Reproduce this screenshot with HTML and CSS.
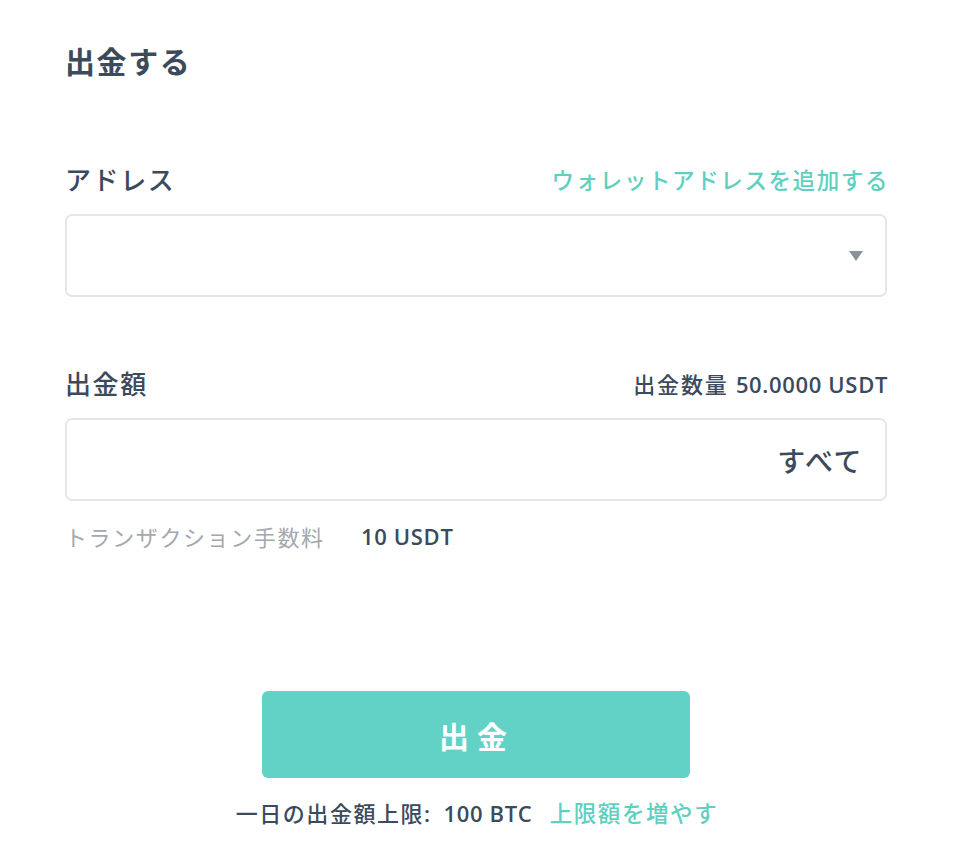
FILE: index.html
```html
<!DOCTYPE html>
<html lang="ja">
<head>
<meta charset="utf-8">
<link rel="stylesheet" href="styles.css">
</head>
<body>
<div class="page">
  <h1 class="title">出金する</h1>

  <div class="field field-address">
    <div class="field-head">
      <span class="label">アドレス</span>
      <a class="link">ウォレットアドレスを追加する</a>
    </div>
    <div class="box select">
      <svg class="caret" width="16" height="12" viewBox="0 0 16 12"><path d="M1 1 H15 L8 11 Z" fill="#8a919e"/></svg>
    </div>
  </div>

  <div class="field field-amount">
    <div class="field-head">
      <span class="label">出金額</span>
      <span class="avail">出金数量 <span class="num">50.0000 USDT</span></span>
    </div>
    <div class="box amount">
      <span class="all">すべて</span>
    </div>
    <div class="fee">
      <span class="fee-label">トランザクション手数料</span>
      <span class="fee-value">10 USDT</span>
    </div>
  </div>

  <div class="actions">
    <button class="btn">出金</button>
    <div class="limit">一日の出金額上限<span class="num">:&nbsp; 100 BTC</span> <a class="link limit-link">上限額を増やす</a></div>
  </div>
</div>
</body>
</html>
```
FILE: styles.css
```css
html, body {
  margin: 0;
  padding: 0;
  background: #ffffff;
}
body {
  font-family: "Open Sans", "Noto Sans CJK JP", sans-serif;
  color: #3b4a5c;
  letter-spacing: 0.1em;
}
.page {
  width: 822px;
  margin-left: 65px;
  padding-top: 41px;
}
.title {
  margin: 0;
  font-size: 30px;
  font-weight: 700;
  line-height: 42px;
  color: #3b4a5c;
}
.field-address {
  margin-top: 76px;
}
.field-head {
  display: flex;
  justify-content: space-between;
  align-items: center;
  height: 40px;
}
.label {
  font-size: 26px;
  font-weight: 500;
  color: #3b4a5c;
}
.link {
  color: #5fd0bf;
  font-size: 22.5px;
  font-weight: 500;
  text-decoration: none;
  cursor: pointer;
  margin-right: -2px;
}
.box {
  box-sizing: border-box;
  height: 83px;
  border: 2px solid #e4e6ea;
  border-radius: 7px;
  display: flex;
  align-items: center;
  justify-content: flex-end;
}
.select {
  margin-top: 15px;
  padding-right: 21px;
}
.caret {
  display: block;
}
.field-amount {
  margin-top: 66px;
}
.amount {
  margin-top: 15px;
  padding-right: 22px;
}
.avail {
  font-size: 22px;
  font-weight: 500;
  color: #3b4a5c;
  letter-spacing: 0.08em;
  margin-right: -1px;
}
.num {
  font-weight: 600;
  letter-spacing: 0.03em;
}
.all {
  font-size: 28px;
  font-weight: 500;
  color: #3b4a5c;
}
.fee {
  display: flex;
  align-items: center;
  margin-top: 18px;
  height: 34px;
}
.fee-label {
  font-size: 22px;
  color: #a3a8b0;
  width: 296px;
}
.fee-value {
  font-size: 22px;
  font-weight: 600;
  color: #3b4a5c;
  letter-spacing: 0.03em;
}
.actions {
  display: flex;
  flex-direction: column;
  align-items: center;
  margin-top: 138px;
}
.btn {
  width: 428px;
  height: 87px;
  border: none;
  border-radius: 6px;
  background: #62d1c6;
  color: #ffffff;
  font-family: "Noto Sans CJK JP", sans-serif;
  font-size: 30px;
  font-weight: 700;
  letter-spacing: 8px;
  padding-left: 8px;
  cursor: pointer;
}
.limit {
  margin-top: 18px;
  font-size: 22px;
  font-weight: 500;
  color: #3b4a5c;
  letter-spacing: 0.07em;
  white-space: nowrap;
}
.limit-link {
  font-weight: 500;
  margin-left: 10px;
  letter-spacing: 0.07em;
}
```
